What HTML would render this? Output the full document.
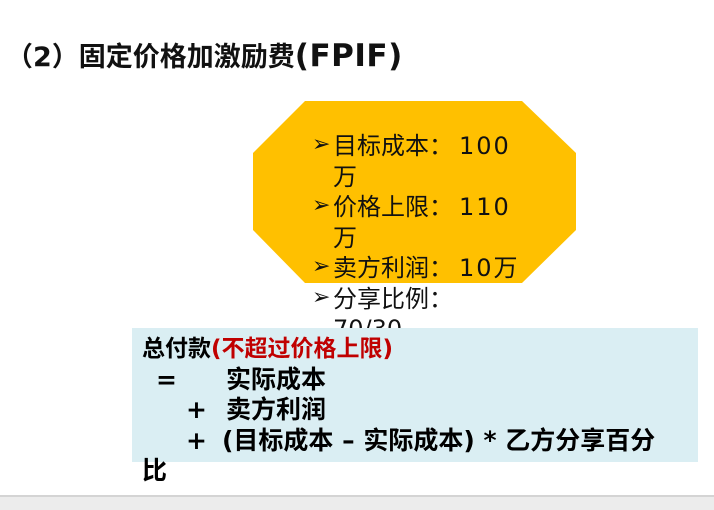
<!DOCTYPE html>
<html><head><meta charset="utf-8"><style>
body{margin:0;width:714px;height:508px;overflow:hidden;background:#fff;position:relative;font-family:"DejaVu Sans","Noto Sans CJK SC",sans-serif;}
.t{position:absolute;left:6px;top:38px;font-size:27px;font-weight:bold;color:#111;white-space:nowrap;line-height:36px}
.oct{position:absolute;left:253px;top:101px;width:323px;height:182px;background:#FFC000;clip-path:polygon(52px 0,269px 0,323px 52px,323px 129px,269px 182px,52px 182px,0 129px,0 52px)}
.list{position:absolute;left:312px;top:131px;font-size:24px;line-height:30.5px;color:#111;width:240px}
.list div{padding-left:21px;position:relative;white-space:nowrap}
.list div span{position:absolute;left:0;top:-1px;font-size:22px;font-weight:bold}
.n{letter-spacing:2px;margin-left:6px}
.box{position:absolute;left:132px;top:328px;width:566px;height:134px;background:#DAEEF3}
.f{position:absolute;left:142px;top:334px;font-size:25px;font-weight:bold;line-height:30.5px;color:#000;white-space:nowrap}
.f div{position:relative;height:30.5px}
.a{position:absolute}
.bot{position:absolute;left:0;top:495px;width:714px;height:13px;background:#ececec;border-top:2px solid #d4d4d4}
</style></head><body>
<div class="t">（2）固定价格加激励费<span style="font-size:31px;letter-spacing:0.5px">(FPIF)</span></div>
<div class="oct"></div>
<div class="list">
<div><span>➢</span>目标成本：<b class="n" style="font-weight:normal">100</b></div>
<div>万</div>
<div><span>➢</span>价格上限：<b class="n" style="font-weight:normal">110</b></div>
<div>万</div>
<div><span>➢</span>卖方利润：<b class="n" style="font-weight:normal">10</b>万</div>
<div><span>➢</span>分享比例：</div>
<div>70/30</div>
</div>
<div class="box"></div>
<div class="f">
<div style="font-size:23px">总付款<span style="color:#C00000">(不超过价格上限)</span></div>
<div><span class="a" style="left:14px">=</span><span class="a" style="left:84px">实际成本</span></div>
<div><span class="a" style="left:44px">+</span><span class="a" style="left:84px">卖方利润</span></div>
<div><span class="a" style="left:44px">+</span><span class="a" style="left:80px">(目标成本 – 实际成本) * 乙方分享百分</span></div>
<div>比</div>
</div>
<div class="bot"></div>
</body></html>
